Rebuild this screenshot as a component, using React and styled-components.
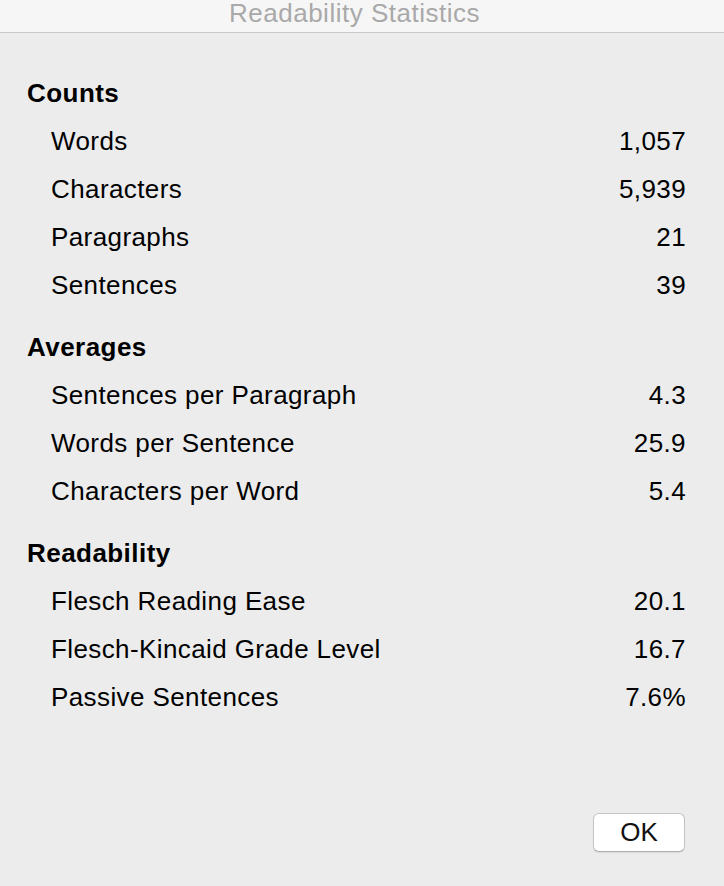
import React from "react";
import styled, { createGlobalStyle } from "styled-components";

const GlobalStyle = createGlobalStyle`
  html, body {
    margin: 0;
    padding: 0;
    background: #ececec;
  }
  body {
    font-family: "Liberation Sans", Arial, sans-serif;
    color: #000;
  }
`;

const sections = [
  {
    title: "Counts",
    rows: [
      ["Words", "1,057"],
      ["Characters", "5,939"],
      ["Paragraphs", "21"],
      ["Sentences", "39"],
    ],
  },
  {
    title: "Averages",
    rows: [
      ["Sentences per Paragraph", "4.3"],
      ["Words per Sentence", "25.9"],
      ["Characters per Word", "5.4"],
    ],
  },
  {
    title: "Readability",
    rows: [
      ["Flesch Reading Ease", "20.1"],
      ["Flesch-Kincaid Grade Level", "16.7"],
      ["Passive Sentences", "7.6%"],
    ],
  },
];

const App = () => {
  return (
    <Window>
      <GlobalStyle />
      <TitleBar>
        <TitleText>Readability Statistics</TitleText>
      </TitleBar>
      <Content>
        {sections.map((section) => (
          <Section key={section.title}>
            <Heading>{section.title}</Heading>
            {section.rows.map(([label, value]) => (
              <Row key={label}>
                <span>{label}</span>
                <span>{value}</span>
              </Row>
            ))}
          </Section>
        ))}
      </Content>
      <Footer>
        <OkButton>OK</OkButton>
      </Footer>
    </Window>
  );
};

export default App;

const Window = styled.div`
  width: 724px;
  height: 886px;
  display: flex;
  flex-direction: column;
  background: #ececec;
  overflow: hidden;
`;

// 타이틀은 살짝 위로, 가운데보다 약간 왼쪽
const TitleBar = styled.div`
  height: 33px;
  box-sizing: border-box;
  flex-shrink: 0;
  background: #f6f6f6;
  border-bottom: 1px solid #c9c9c9;
  display: flex;
  align-items: flex-start;
  justify-content: center;
  padding-right: 15px;
`;

const TitleText = styled.span`
  color: #a9a9a9;
  font-size: 26px;
  letter-spacing: 0.5px;
  line-height: 27px;
`;

const Content = styled.div`
  flex: 1;
  display: flex;
  flex-direction: column;
  gap: 14px;
  padding: 36px 38px 0 27px;
`;

const Section = styled.div`
  display: flex;
  flex-direction: column;
`;

const Heading = styled.div`
  font-size: 26px;
  font-weight: bold;
  letter-spacing: 0.45px;
  line-height: 48px;
`;

const Row = styled.div`
  display: flex;
  justify-content: space-between;
  padding-left: 24px;
  font-size: 26px;
  letter-spacing: 0.4px;
  line-height: 48px;
`;

const Footer = styled.div`
  display: flex;
  justify-content: flex-end;
  padding: 0 39px 34px 0;
`;

const OkButton = styled.button`
  width: 92px;
  height: 39px;
  background: #fff;
  border: 1px solid #c4c4c4;
  border-bottom-color: #b0b0b0;
  border-radius: 6px;
  box-shadow: 0 1px 1px rgba(0, 0, 0, 0.08);
  font-family: "Liberation Sans", Arial, sans-serif;
  font-size: 26px;
  color: #111;
  padding: 0;
  cursor: pointer;
`;
